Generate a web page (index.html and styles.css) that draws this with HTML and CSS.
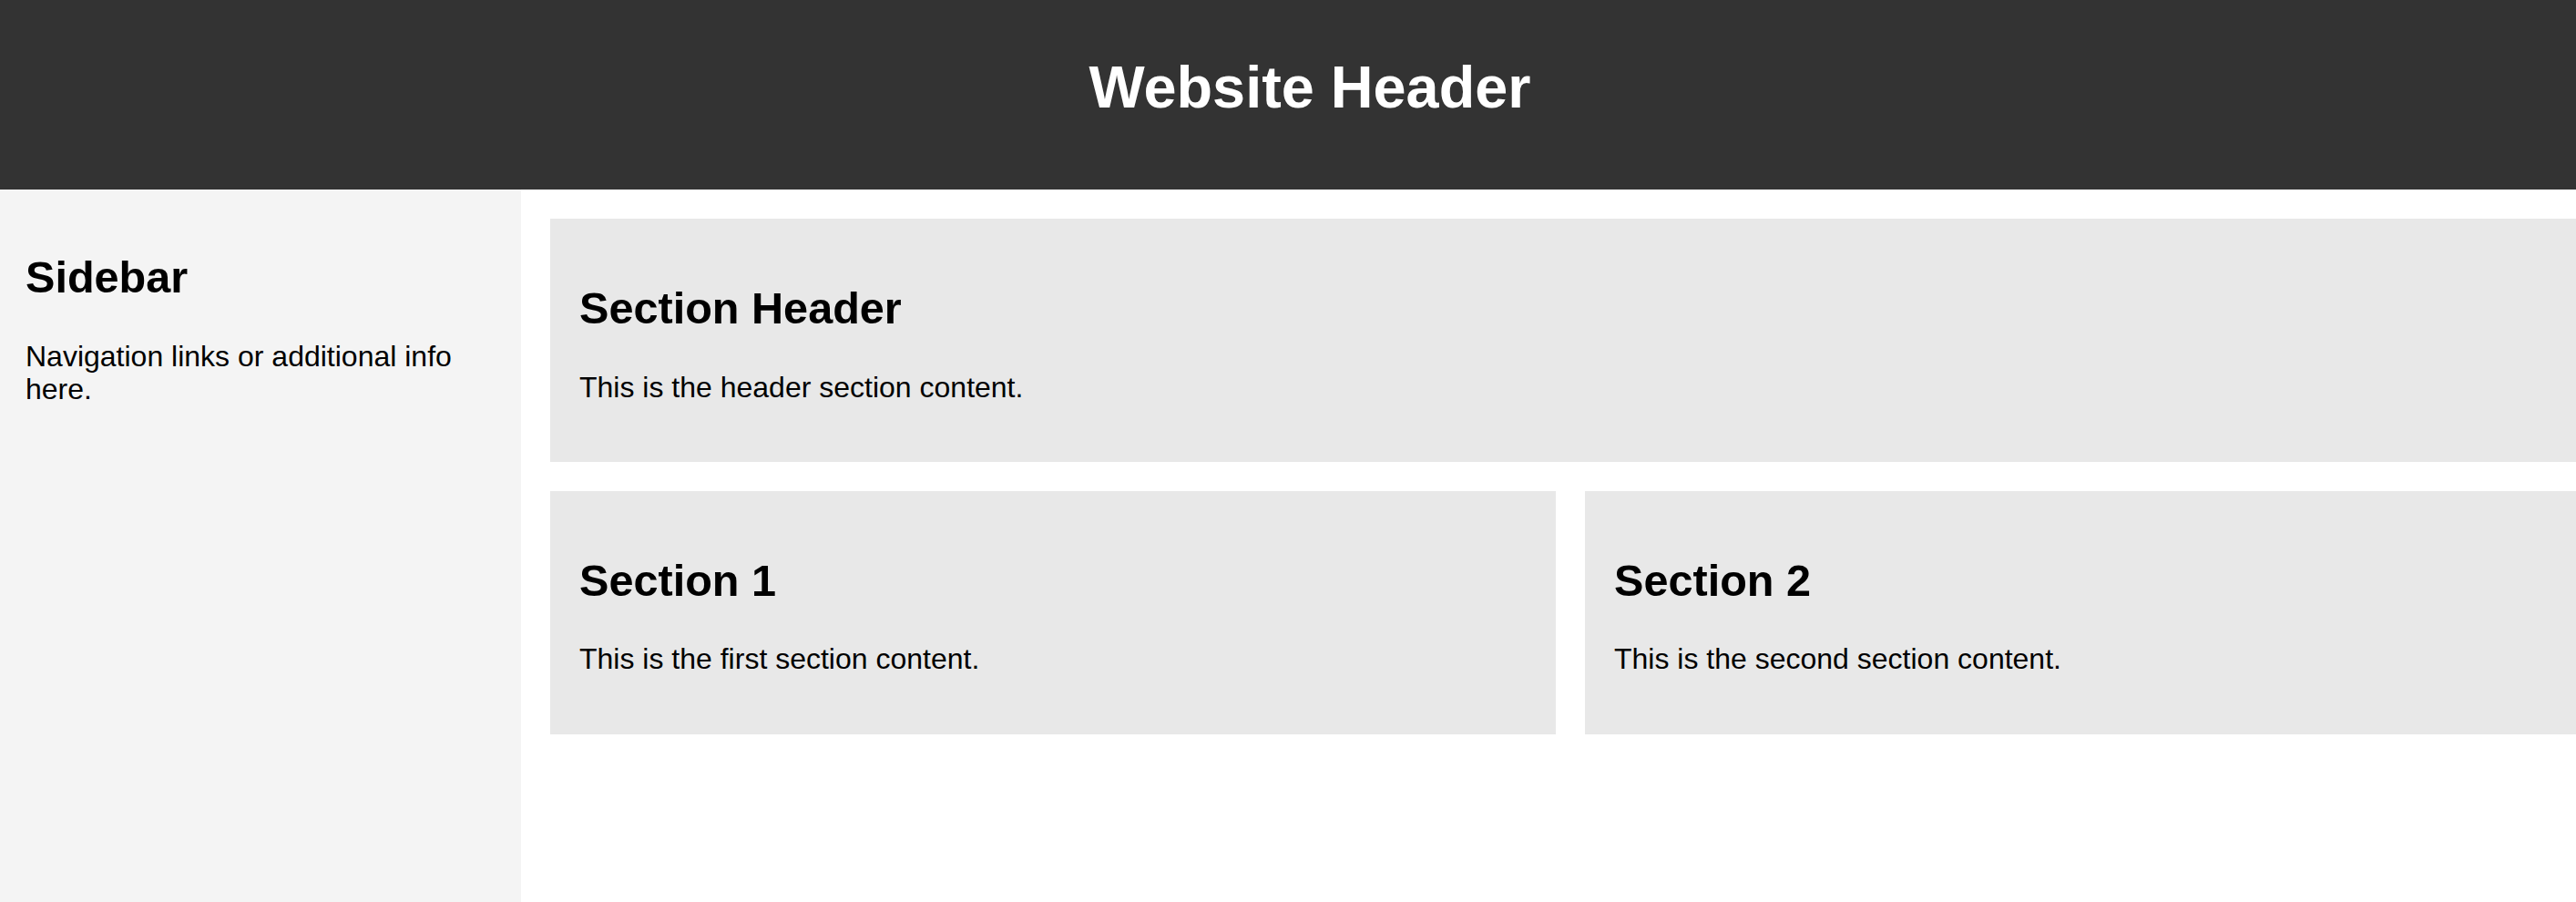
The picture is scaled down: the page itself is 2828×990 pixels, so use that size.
FILE: index.html
```html
<!DOCTYPE html>
<html lang="en">
<head>
    <meta charset="UTF-8">
    <meta name="viewport" content="width=device-width, initial-scale=1.0">
    <title>Website Layout</title>
    <link rel="stylesheet" href="styles.css">
</head>
<body>
    <div class="page">
        <header class="site-header">
            <h1>Website Header</h1>
        </header>
        <div class="layout">
            <aside class="sidebar">
                <h2>Sidebar</h2>
                <p>Navigation links or additional info here.</p>
            </aside>
            <main class="content">
                <section class="section section-wide">
                    <h2>Section Header</h2>
                    <p>This is the header section content.</p>
                </section>
                <section class="section">
                    <h2>Section 1</h2>
                    <p>This is the first section content.</p>
                </section>
                <section class="section">
                    <h2>Section 2</h2>
                    <p>This is the second section content.</p>
                </section>
            </main>
        </div>
    </div>
</body>
</html>
```

FILE: styles.css
```css
* {
    box-sizing: border-box;
}
body {
    margin: 0;
    font-family: "Liberation Sans", Arial, sans-serif;
    font-size: 32.4px;
    line-height: 1.11;
    color: #000;
    background: #fff;
}
.page {
    width: 2876px;
    min-height: 100vh;
    display: flex;
    flex-direction: column;
}
.site-header {
    background-color: #333;
    color: #fff;
    text-align: center;
    height: 208px;
    padding-top: 60px;
}
.site-header h1 {
    margin: 0;
    font-size: 64.8px;
}
.layout {
    flex: 1;
    display: flex;
}
.sidebar {
    width: 572px;
    flex-shrink: 0;
    background-color: #f4f4f4;
    padding: 30px 28px;
}
.content {
    flex: 1;
    display: grid;
    grid-template-columns: 1fr 1fr;
    gap: 32px;
    padding: 32px;
    align-content: start;
}
.section {
    background-color: #e8e8e8;
    padding: 32px;
}
.section-wide {
    grid-column: 1 / 3;
}
h2 {
    font-size: 48.6px;
    margin: 40.3px 0;
}
p {
    font-size: 32px;
    line-height: 36px;
    margin: 32.4px 0;
}
```
